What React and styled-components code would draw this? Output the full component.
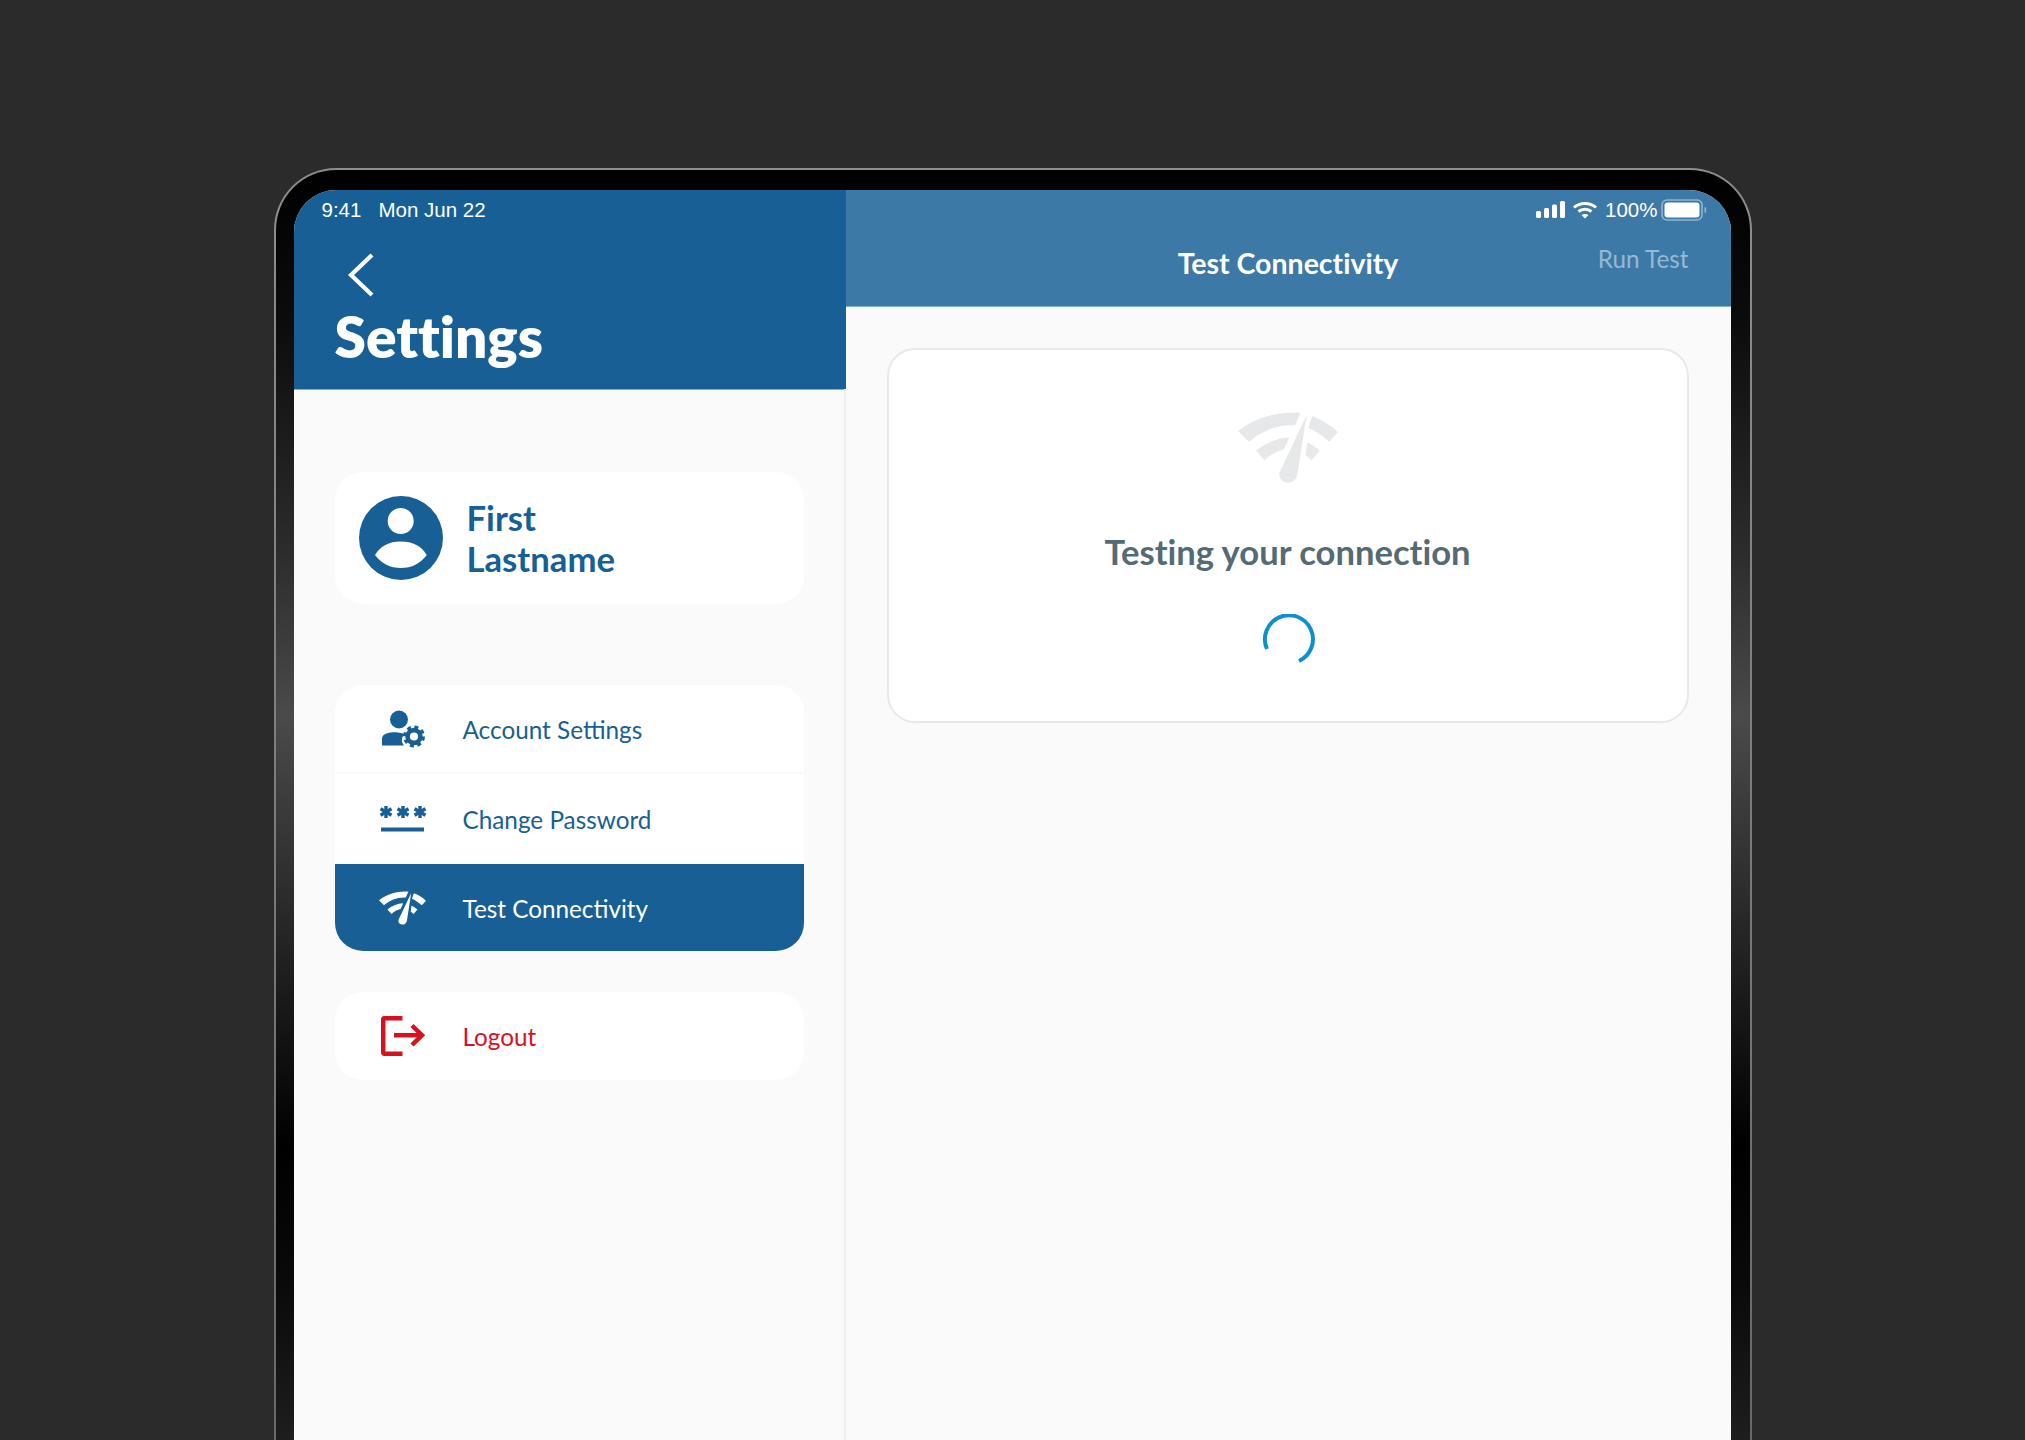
import styled, { createGlobalStyle } from "styled-components";

const GlobalStyle = createGlobalStyle`
  html, body { margin: 0; padding: 0; background: #2b2b2b; }
  * { box-sizing: border-box; }
`;

const BLUE = "#175f94";
const WIFI_PATH =
  "M473 152 C525 112 590 93 662 97 L645 135 C590 132 545 152 505 185 Z M697 108 C725 118 752 134 775 155 L748 185 C730 168 708 152 685 142 Z M527 212 C555 190 590 173 628 172 L612 208 C590 212 570 224 553 240 Z M682 187 C697 193 709 202 720 212 L695 240 C690 235 684 230 677 226 Z M680 105 L652 285 C648 302 634 309 622 308 C604 306 593 292 600 274 Z";

const Page = styled.div`
  height: 1440px;
  overflow: hidden;
  display: flex;
  justify-content: center;
  padding-top: 168px;
  background: #2b2b2b;
`;

const Device = styled.div`
  width: 1478px;
  height: 1272px;
  padding: 2px 2px 0;
  border-radius: 62px 62px 0 0;
  background: linear-gradient(180deg, #8e8e8e 0%, #808080 40%, #686868 100%);
`;

const Bezel = styled.div`
  height: 100%;
  padding: 20px 19px 0 18px;
  border-radius: 60px 60px 0 0;
  background: linear-gradient(
    180deg,
    #000 0%,
    #0c0c0c 12%,
    #2c2c2c 30%,
    #4a4a4a 43%,
    #2a2a2a 58%,
    #000 77%,
    #0a0a0a 88%,
    #1e1e1e 100%
  );
`;

const Screen = styled.div`
  height: 100%;
  display: grid;
  grid-template-columns: 552px 1fr;
  border-radius: 42px 42px 0 0;
  overflow: hidden;
  background: #fafafa;
  font-family: Lato, "Open Sans", sans-serif;
`;

const Sidebar = styled.aside`
  display: flex;
  flex-direction: column;
`;

const SideHeader = styled.header`
  height: 199px;
  background: ${BLUE};
  color: #fff;
  padding: 8px 0 0 28px;
  box-shadow: 0 1px 0 #7fb2d6;
`;

const StatusText = styled.span`
  font-family: "Liberation Sans", Arial, sans-serif;
  font-size: 20.5px;
  line-height: 24px;
  color: #fff;
`;

const StatusLeft = styled.div`
  display: flex;
  gap: 17px;
`;

const BackButton = styled.div`
  margin: 31px 0 0 25px;
  width: 28px;
  height: 44px;
  display: flex;
`;

const Title = styled.h1`
  margin: 5px 0 0 13px;
  font-size: 56.8px;
  line-height: 68px;
  font-weight: 800;
  font-variant-ligatures: none;
`;

const SideBody = styled.div`
  flex: 1;
  display: flex;
  flex-direction: column;
  padding: 83px 40px 0 41px;
  border-right: 2px solid #eeeeee;
`;

const ProfileCard = styled.div`
  height: 132px;
  display: flex;
  align-items: center;
  gap: 24px;
  padding-left: 24px;
  border-radius: 28px;
  background: #fff;
`;

const ProfileName = styled.div`
  font-size: 34.7px;
  line-height: 41px;
  font-weight: 700;
  font-variant-ligatures: none;
  color: ${BLUE};
`;

const MenuCard = styled.nav`
  margin-top: ${(p) => p.$top}px;
  border-radius: 28px;
  overflow: hidden;
  background: #fff;
`;

const MenuRow = styled.div`
  height: ${(p) => p.$height}px;
  display: flex;
  align-items: center;
  gap: 36px;
  padding-left: 44px;
  font-size: 24.3px;
  color: ${(p) => (p.$active ? "#fff" : p.$danger ? "#d8111f" : BLUE)};
  background: ${(p) => (p.$active ? BLUE : "#fff")};
  border-bottom: ${(p) => (p.$divider ? "2px solid #fafafa" : "none")};
`;

const MenuLabel = styled.span`
  padding-top: ${(p) => p.$nudge || 0}px;
`;

const IconSlot = styled.span`
  width: 48px;
  height: 40px;
  display: flex;
  align-items: center;
  justify-content: center;
  flex: none;
`;

const Main = styled.main`
  display: flex;
  flex-direction: column;
`;

const MainHeader = styled.header`
  height: 116px;
  flex: none;
  background: #3d79a6;
  color: #fff;
  padding: 8px 24px 0 42px;
  box-shadow: 0 1px 0 #7fb2d6;
`;

const StatusRight = styled.div`
  display: flex;
  align-items: center;
  justify-content: flex-end;
  height: 24px;
`;

const StatusGap = styled.span`
  width: ${(p) => p.$width}px;
`;

const TitleRow = styled.div`
  display: grid;
  grid-template-columns: 1fr auto 1fr;
  align-items: center;
  margin-top: 20px;
  padding-right: 18px;
  height: 42px;
`;

const MainTitle = styled.div`
  font-size: 28.5px;
  font-weight: 700;
  line-height: 36px;
  font-variant-ligatures: none;
`;

const RunTest = styled.div`
  justify-self: end;
  font-size: 24.3px;
  line-height: 30px;
  color: #93b9d5;
  margin-top: -8px;
  font-variant-ligatures: none;
`;

const MainBody = styled.div`
  padding: 42px 42px 0 41px;
`;

const TestCard = styled.section`
  height: 375px;
  display: flex;
  flex-direction: column;
  align-items: center;
  padding-top: 62px;
  border: 2px solid #e8e8e8;
  border-radius: 28px;
  background: #fff;
`;

const TestTitle = styled.div`
  margin-top: 47px;
  font-size: 34.6px;
  line-height: 44px;
  font-weight: 700;
  font-variant-ligatures: none;
  color: #546a75;
`;

const Spinner = styled.svg`
  margin: 40px 0 0 3px;
`;

const WifiIcon = ({ width, height, color }) => (
  <svg width={width} height={height} viewBox="473 95 302 214">
    <path d={WIFI_PATH} fill={color} />
  </svg>
);

const AvatarIcon = () => (
  <svg width="84" height="84" viewBox="0 0 84 84">
    <circle cx="42" cy="42" r="42" fill={BLUE} />
    <circle cx="41.7" cy="25" r="13" fill="#fff" />
    <path d="M16 59 Q24 45.5 41.8 45.5 Q60 45.5 67.7 59 Q58 72 41.8 72 Q26 72 16 59Z" fill="#fff" />
  </svg>
);

const AccountIcon = () => (
  <svg width="44" height="38" viewBox="0 0 44 38" fill={BLUE}>
    <circle cx="18" cy="9.5" r="9" />
    <path d="M1 35.5 V29 C1 25 5 23 10 22.5 C14 22 18 22.5 24 24 C20 27 20 32 23 35.5 Z" />
    <circle cx="33" cy="26.5" r="6.4" fill="none" stroke={BLUE} strokeWidth="4.6" />
    <circle cx="33" cy="26.5" r="9.4" fill="none" stroke={BLUE} strokeWidth="3.2" strokeDasharray="3.9 3.5" />
  </svg>
);

const PasswordIcon = () => (
  <svg width="48" height="28" viewBox="0 0 48 28" stroke={BLUE} strokeWidth="3.4">
    {[7, 24, 41].map((x) => (
      <g key={x}>
        <path d={`M${x} 1 V13`} />
        <path d={`M${x - 5.5} 3.8 L${x + 5.5} 10.2`} />
        <path d={`M${x - 5.5} 10.2 L${x + 5.5} 3.8`} />
      </g>
    ))}
    <path d="M2 24.5 H45" strokeWidth="4" />
  </svg>
);

const LogoutIcon = () => (
  <svg width="44" height="40" viewBox="0 0 44 40" fill="none" stroke="#d8111f" strokeWidth="4.5">
    <path d="M21.5 2.2 H3.5 Q2.2 2.2 2.2 3.5 V36.5 Q2.2 37.8 3.5 37.8 H21.5" />
    <path d="M13 19.2 H41" />
    <path d="M31 9.5 L41 19.2 L31 29" />
  </svg>
);

const SignalIcon = () => (
  <svg width="30" height="18" viewBox="0 0 30 18" fill="#fff">
    <rect x="0" y="10" width="5" height="7" rx="1.5" />
    <rect x="8" y="7" width="5" height="10" rx="1.5" />
    <rect x="16" y="3.5" width="5" height="13.5" rx="1.5" />
    <rect x="24" y="0" width="5" height="17" rx="1.5" />
  </svg>
);

const StatusWifi = () => (
  <svg width="26" height="18" viewBox="0 0 26 18" fill="none" stroke="#fff" strokeWidth="3">
    <path d="M2 6.5 C8 1 18 1 24 6.5" />
    <path d="M6.5 10.5 C10 7.5 16 7.5 19.5 10.5" />
    <path d="M9.5 14 L13 17.5 L16.5 14 C14.5 12.6 11.5 12.6 9.5 14 Z" fill="#fff" stroke="none" />
  </svg>
);

const BatteryIcon = () => (
  <svg width="46" height="22" viewBox="0 0 46 22">
    <rect x="1" y="1" width="40" height="20" rx="5" fill="none" stroke="#8fb6d4" strokeWidth="1.6" />
    <rect x="3.5" y="3.5" width="35" height="15" rx="3" fill="#fff" />
    <rect x="43.5" y="8" width="1.6" height="6" rx="0.8" fill="#8fb6d4" />
  </svg>
);

const App = () => (
  <Page>
    <GlobalStyle />
    <Device>
      <Bezel>
        <Screen>
          <Sidebar>
            <SideHeader>
              <StatusLeft>
                <StatusText>9:41</StatusText>
                <StatusText>Mon Jun 22</StatusText>
              </StatusLeft>
              <BackButton>
                <svg width="28" height="44" viewBox="0 0 28 44" fill="none" stroke="#fff" strokeWidth="4.2">
                  <path d="M25 2 L4 22 L25 42" />
                </svg>
              </BackButton>
              <Title>Settings</Title>
            </SideHeader>
            <SideBody>
              <ProfileCard>
                <AvatarIcon />
                <ProfileName>
                  First
                  <br />
                  Lastname
                </ProfileName>
              </ProfileCard>
              <MenuCard $top={81}>
                <MenuRow $height={89} $divider>
                  <IconSlot><AccountIcon /></IconSlot>
                  <MenuLabel $nudge={2}>Account Settings</MenuLabel>
                </MenuRow>
                <MenuRow $height={90}>
                  <IconSlot><PasswordIcon /></IconSlot>
                  <MenuLabel $nudge={1}>Change Password</MenuLabel>
                </MenuRow>
                <MenuRow $height={87} $active>
                  <IconSlot><WifiIcon width={47} height={34} color="#fff" /></IconSlot>
                  <MenuLabel $nudge={2}>Test Connectivity</MenuLabel>
                </MenuRow>
              </MenuCard>
              <MenuCard $top={41}>
                <MenuRow $height={88} $danger>
                  <IconSlot><LogoutIcon /></IconSlot>
                  <MenuLabel>Logout</MenuLabel>
                </MenuRow>
              </MenuCard>
            </SideBody>
          </Sidebar>
          <Main>
            <MainHeader>
              <StatusRight>
                <SignalIcon />
                <StatusGap $width={6} />
                <StatusWifi />
                <StatusGap $width={7} />
                <StatusText>100%</StatusText>
                <StatusGap $width={3} />
                <BatteryIcon />
              </StatusRight>
              <TitleRow>
                <span />
                <MainTitle>Test Connectivity</MainTitle>
                <RunTest>Run Test</RunTest>
              </TitleRow>
            </MainHeader>
            <MainBody>
              <TestCard>
                <WifiIcon width={100} height={71} color="#e6e8e9" />
                <TestTitle>Testing your connection</TestTitle>
                <Spinner width="54" height="52" viewBox="0 0 54 52" fill="none" stroke="#0f8fd0" strokeWidth="4">
                  <path d="M5 35 A24 24 0 1 1 37 47" />
                </Spinner>
              </TestCard>
            </MainBody>
          </Main>
        </Screen>
      </Bezel>
    </Device>
  </Page>
);

export default App;
